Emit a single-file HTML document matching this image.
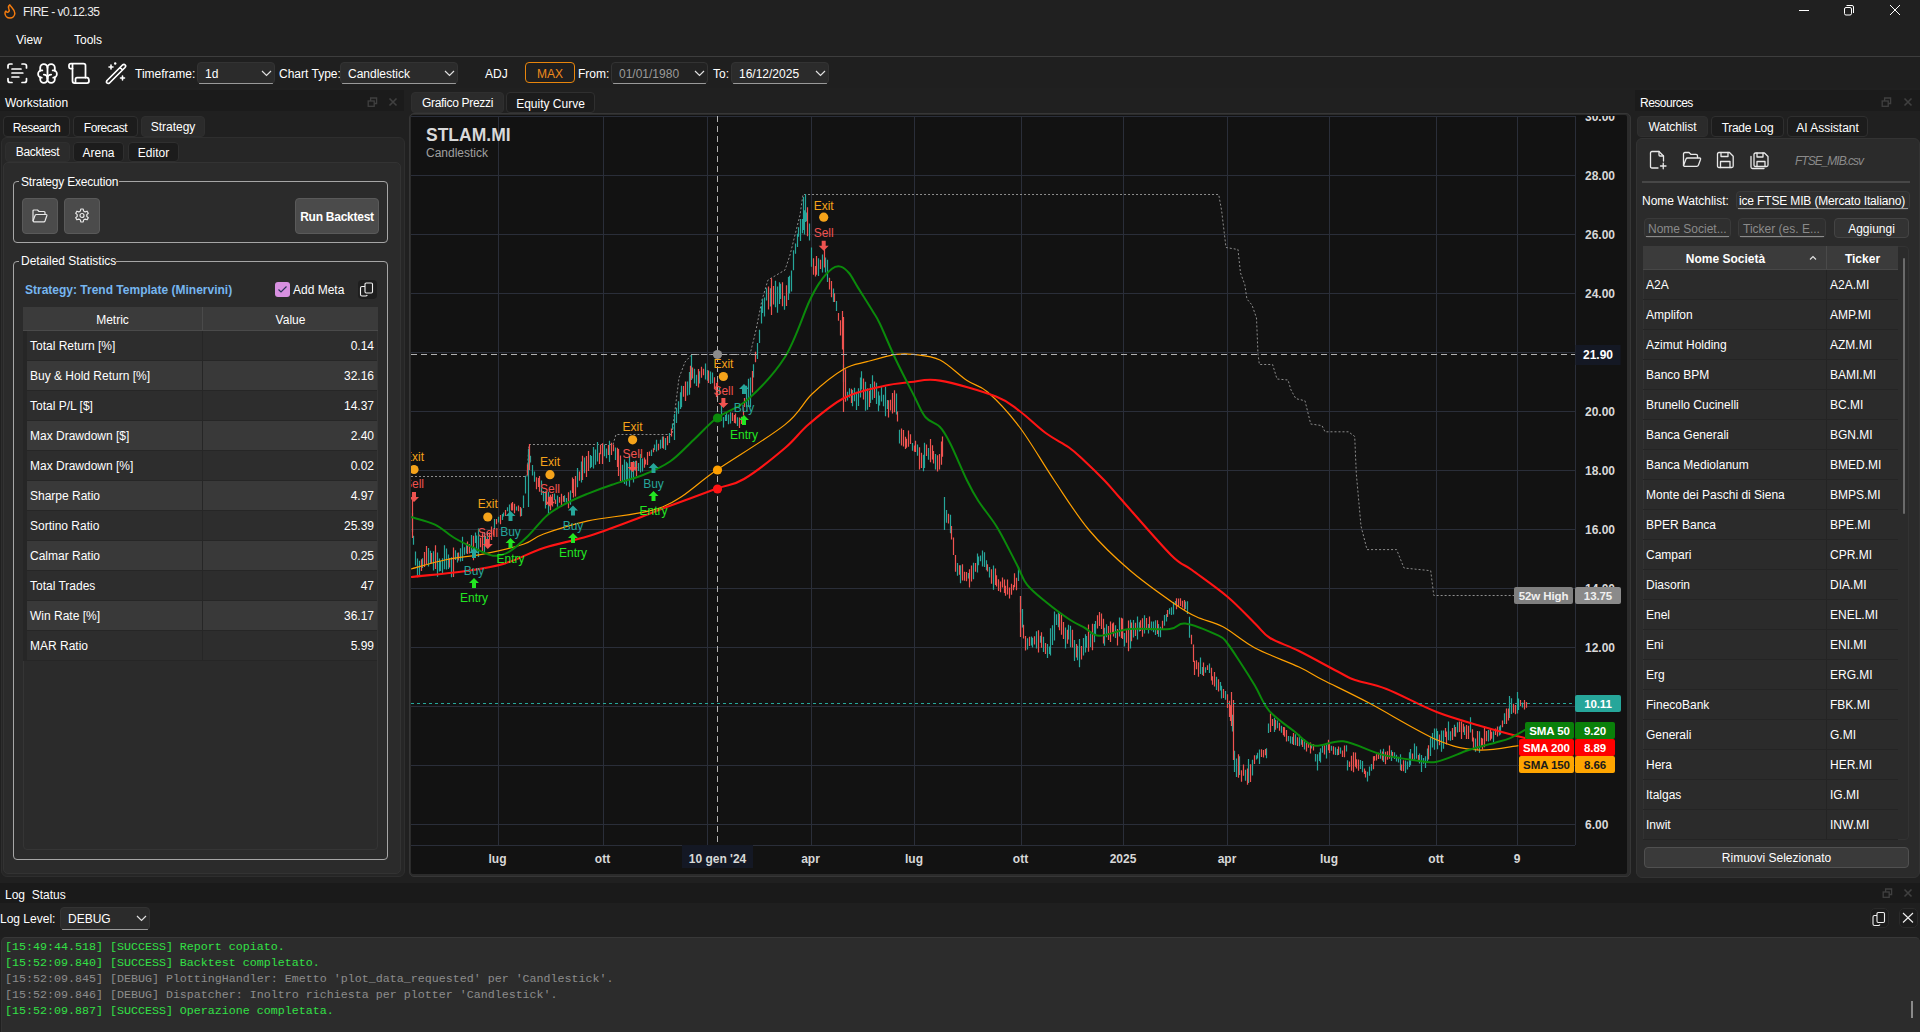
<!DOCTYPE html><html><head><meta charset="utf-8"><style>
*{margin:0;padding:0}
html,body{width:1920px;height:1032px;overflow:hidden;background:#202020;font-family:"Liberation Sans",sans-serif;font-size:12px;color:#ffffff}
.a{position:absolute}
.t{position:absolute;white-space:nowrap;line-height:16px;padding-top:1px}
svg text{font-family:"Liberation Sans",sans-serif}
</style></head><body>
<div class="a" style="left:0px;top:0px;width:1920px;height:56px;background:#202020"></div>
<svg class="a" style="left:0;top:0" width="24" height="24" viewBox="0 0 24 24"><path d="M9.8,4.9 C11.5,7.5 14.8,9.5 14.8,13.2 C14.8,16 12.6,18 9.9,18 C7.2,18 5,16 5,13.3 C5,12.3 5.3,11.5 5.9,11 C6.5,12.3 7.8,12.6 8.6,11.8 C9.5,10.9 9.3,9.5 8.7,8.2 C8.2,7 8.8,5.6 9.8,4.9 Z" fill="none" stroke="#f57c0f" stroke-width="1.5" stroke-linejoin="round"/></svg>
<div class="t" style="left:23px;top:3px;font-size:12px;color:#ececec;letter-spacing:-0.5px">FIRE - v0.12.35</div>
<div class="a" style="left:1799px;top:10px;width:10px;height:1px;background:#ffffff"></div>
<svg class="a" style="left:1843px;top:4px" width="12" height="12" viewBox="0 0 12 12"><rect x="1.5" y="3.5" width="7" height="7.5" rx="1.5" fill="none" stroke="#fff" stroke-width="1"/><path d="M3.5,1.5 H9 Q10.5,1.5 10.5,3 V9" fill="none" stroke="#fff" stroke-width="1"/></svg>
<svg class="a" style="left:1889px;top:4px" width="12" height="12" viewBox="0 0 12 12"><path d="M1,1 L11,11 M11,1 L1,11" stroke="#fff" stroke-width="1"/></svg>
<div class="t" style="left:16px;top:31px;font-size:12px">View</div>
<div class="t" style="left:74px;top:31px;font-size:12px">Tools</div>
<div class="a" style="left:0px;top:56px;width:1920px;height:1px;background:#3d3d3d"></div>
<div class="a" style="left:0px;top:57px;width:1920px;height:31px;background:#1f1f1f"></div>
<svg class="a" style="left:6px;top:62px" width="23" height="23" viewBox="0 0 23 23" fill="none" stroke="#fff" stroke-width="1.7" stroke-linecap="round">
<path d="M2,6 V4 Q2,2 4,2 H6 M16,2 H18 Q20.5,2 20.5,4 V6 M20.5,16.5 V18.5 Q20.5,20.5 18.5,20.5 H16 M6,20.5 H4 Q2,20.5 2,18.5 V16.5"/>
<path d="M6,7 H15 M6,11 H16.8 M6,15 H12.8"/></svg>
<svg class="a" style="left:35px;top:61px" width="25" height="25" viewBox="0 0 24 24" fill="none" stroke="#fff" stroke-width="1.75" stroke-linecap="round" stroke-linejoin="round">
<path d="M15.5 13a3.5 3.5 0 0 0 -3.5 3.5v1a3.5 3.5 0 0 0 7 0v-1.8"/><path d="M8.5 13a3.5 3.5 0 0 1 3.5 3.5v1a3.5 3.5 0 0 1 -7 0v-1.8"/><path d="M17.5 16a3.5 3.5 0 0 0 0 -7h-.5"/><path d="M19 9.3v-2.8a3.5 3.5 0 0 0 -7 0"/><path d="M6.5 16a3.5 3.5 0 0 1 0 -7h.5"/><path d="M5 9.3v-2.8a3.5 3.5 0 0 1 7 0v10"/></svg>
<svg class="a" style="left:67px;top:62px" width="24" height="23" viewBox="0 0 24 23" fill="none" stroke="#fff" stroke-width="1.75" stroke-linecap="round" stroke-linejoin="round">
<path d="M5.5,6.5 H3.5 Q2,6.5 2,5 V3.5 Q2,1.5 4,1.5 H16.5 Q18.5,1.5 18.5,3.5 V15.5"/><path d="M5.5,1.8 V19 Q5.5,21 7.5,21 H20 Q22,21 22,19 Q22,15.5 20,15.5 H10 Q8.5,15.5 8.5,17.5 V21"/></svg>
<svg class="a" style="left:104px;top:61px" width="24" height="24" viewBox="0 0 24 24" fill="none" stroke="#fff" stroke-width="1.7" stroke-linecap="round" stroke-linejoin="round">
<path d="M3,19.5 L18.5,4 Q20,2.8 21.2,4 Q22.2,5.2 21,6.5 L5.5,22 Q4,23 3,22 Q2,21 3,19.5 Z M16,6.5 L18.5,9"/>
<path d="M5,6 H9 M7,4 V8 M16.5,17 H20.5 M18.5,15 V19" stroke-width="1.6"/><circle cx="11.2" cy="2.5" r="1.2" fill="#fff" stroke="none"/></svg>
<div class="t" style="left:135px;top:65px;font-size:12px">Timeframe:</div>
<div class="a" style="left:197px;top:62px;width:78px;height:22px;background:#2b2b2b;border-radius:4px;border:1px solid #333;box-sizing:border-box;"></div><div class="a" style="left:199px;top:83px;width:74px;height:1px;background:#9a9a9a;border-radius:1px;"></div><div class="t" style="left:205px;top:62px;line-height:22px;color:#ffffff;">1d</div><div class="a" style="left:261px;top:70px;width:11px;height:7px;line-height:0"><svg width="11" height="7" viewBox="0 0 11 7"><path d="M1,1 L5.5,5.5 L10,1" stroke="#e0e0e0" stroke-width="1.2" fill="none"/></svg></div>
<div class="t" style="left:279px;top:65px;font-size:12px">Chart Type:</div>
<div class="a" style="left:340px;top:62px;width:118px;height:22px;background:#2b2b2b;border-radius:4px;border:1px solid #333;box-sizing:border-box;"></div><div class="a" style="left:342px;top:83px;width:114px;height:1px;background:#9a9a9a;border-radius:1px;"></div><div class="t" style="left:348px;top:62px;line-height:22px;color:#ffffff;">Candlestick</div><div class="a" style="left:444px;top:70px;width:11px;height:7px;line-height:0"><svg width="11" height="7" viewBox="0 0 11 7"><path d="M1,1 L5.5,5.5 L10,1" stroke="#e0e0e0" stroke-width="1.2" fill="none"/></svg></div>
<div class="t" style="left:485px;top:65px;font-size:12px">ADJ</div>
<div class="a" style="left:525px;top:62px;width:50px;height:21px;border:1px solid #e8850c;border-radius:4px;box-sizing:border-box;"></div>
<div class="t" style="left:537px;top:65px;font-size:12px;color:#f08a1c">MAX</div>
<div class="t" style="left:578px;top:65px;font-size:12px">From:</div>
<div class="a" style="left:611px;top:62px;width:97px;height:22px;background:#222222;border-radius:4px;border:1px solid #333;box-sizing:border-box;"></div><div class="a" style="left:613px;top:83px;width:93px;height:1px;background:#9a9a9a;border-radius:1px;"></div><div class="t" style="left:619px;top:62px;line-height:22px;color:#9a9a9a;">01/01/1980</div><div class="a" style="left:694px;top:70px;width:11px;height:7px;line-height:0"><svg width="11" height="7" viewBox="0 0 11 7"><path d="M1,1 L5.5,5.5 L10,1" stroke="#e0e0e0" stroke-width="1.2" fill="none"/></svg></div>
<div class="t" style="left:713px;top:65px;font-size:12px">To:</div>
<div class="a" style="left:731px;top:62px;width:98px;height:22px;background:#2b2b2b;border-radius:4px;border:1px solid #333;box-sizing:border-box;"></div><div class="a" style="left:733px;top:83px;width:94px;height:1px;background:#9a9a9a;border-radius:1px;"></div><div class="t" style="left:739px;top:62px;line-height:22px;color:#ffffff;">16/12/2025</div><div class="a" style="left:815px;top:70px;width:11px;height:7px;line-height:0"><svg width="11" height="7" viewBox="0 0 11 7"><path d="M1,1 L5.5,5.5 L10,1" stroke="#e0e0e0" stroke-width="1.2" fill="none"/></svg></div>
<div class="a" style="left:0px;top:90px;width:404px;height:21px;background:#1b1b1b"></div>
<div class="t" style="left:5px;top:94px;font-size:12px">Workstation</div>
<svg class="a" style="left:367px;top:97px" width="11" height="10" viewBox="0 0 11 10" fill="none" stroke="#404040" stroke-width="1.3"><rect x="1.2" y="4" width="6" height="5.3"/><path d="M3.6,4 V1 H9.6 V6.5 H7.2"/></svg>
<svg class="a" style="left:388px;top:97px" width="10" height="10" viewBox="0 0 10 10"><path d="M1.5,1.5 L8.5,8.5 M8.5,1.5 L1.5,8.5" stroke="#404040" stroke-width="1.6"/></svg>
<div class="a" style="left:3px;top:116px;width:67px;height:21px;background:#1c1c1c;border:1px solid #2f2f2f;border-radius:4px;box-sizing:border-box;"></div><div class="t" style="left:3px;top:117px;width:67px;text-align:center;line-height:21px;font-size:12px;letter-spacing:-0.5px">Research</div>
<div class="a" style="left:73px;top:116px;width:65px;height:21px;background:#1c1c1c;border:1px solid #2f2f2f;border-radius:4px;box-sizing:border-box;"></div><div class="t" style="left:73px;top:117px;width:65px;text-align:center;line-height:21px;font-size:12px;letter-spacing:-0.4px">Forecast</div>
<div class="a" style="left:141px;top:116px;width:64px;height:21px;background:#2b2b2b;border:1px solid #2f2f2f;border-radius:4px;box-sizing:border-box;"></div><div class="t" style="left:141px;top:116px;width:64px;text-align:center;line-height:21px;font-size:12px;letter-spacing:0px">Strategy</div>
<div class="a" style="left:1px;top:137px;width:404px;height:740px;background:#262626;border:1px solid #2e2e2e;border-radius:6px;box-sizing:border-box;"></div>
<div class="a" style="left:5px;top:142px;width:65px;height:20px;background:#2b2b2b;border:1px solid #2f2f2f;border-radius:4px;box-sizing:border-box;"></div><div class="t" style="left:5px;top:141px;width:65px;text-align:center;line-height:20px;font-size:12px;letter-spacing:-0.3px">Backtest</div>
<div class="a" style="left:73px;top:142px;width:51px;height:20px;background:#1c1c1c;border:1px solid #2f2f2f;border-radius:4px;box-sizing:border-box;"></div><div class="t" style="left:73px;top:142px;width:51px;text-align:center;line-height:20px;font-size:12px;letter-spacing:0px">Arena</div>
<div class="a" style="left:128px;top:142px;width:51px;height:20px;background:#1c1c1c;border:1px solid #2f2f2f;border-radius:4px;box-sizing:border-box;"></div><div class="t" style="left:128px;top:142px;width:51px;text-align:center;line-height:20px;font-size:12px;letter-spacing:0px">Editor</div>
<div class="a" style="left:3px;top:162px;width:398px;height:712px;background:#2b2b2b;border:1px solid #333;border-radius:5px;box-sizing:border-box;"></div>
<div class="a" style="left:13px;top:181px;width:375px;height:62px;border:1px solid #a6a6a6;border-radius:4px;box-sizing:border-box;"></div>
<div class="a" style="left:19px;top:175px;width:100px;height:14px;background:#2b2b2b"></div>
<div class="t" style="left:21px;top:173px;font-size:12px;letter-spacing:-0.2px">Strategy Execution</div>
<div class="a" style="left:22px;top:198px;width:36px;height:36px;background:#4b4b4b;border:1px solid #5a5a5a;box-sizing:border-box;border-radius:4px"></div>
<svg class="a" style="left:32px;top:209px" width="16" height="14" viewBox="0 0 16 14" fill="none" stroke="#e8e8e8" stroke-width="1.2" stroke-linejoin="round"><path d="M1,12 V2 Q1,1 2,1 H5.5 L7,2.5 H12 Q13,2.5 13,3.5 V5.5"/><path d="M1,12 L3,6.5 Q3.3,5.5 4.5,5.5 H14 Q15.2,5.5 14.8,6.8 L13,12 Q12.7,12.8 11.8,12.8 H1.8 Z"/></svg>
<div class="a" style="left:64px;top:198px;width:36px;height:36px;background:#4b4b4b;border:1px solid #5a5a5a;box-sizing:border-box;border-radius:4px"></div>
<svg class="a" style="left:74px;top:208px" width="16" height="16" viewBox="0 0 16 16" fill="none" stroke="#e8e8e8" stroke-width="1.2"><path d="M6.8,1 H9.2 L9.6,3 L11.2,3.9 L13.1,3.2 L14.3,5.3 L12.8,6.6 V8.4 L14.3,9.7 L13.1,11.8 L11.2,11.1 L9.6,12 L9.2,14 H6.8 L6.4,12 L4.8,11.1 L2.9,11.8 L1.7,9.7 L3.2,8.4 V6.6 L1.7,5.3 L2.9,3.2 L4.8,3.9 L6.4,3 Z" stroke-linejoin="round"/><circle cx="8" cy="7.5" r="2"/></svg>
<div class="a" style="left:295px;top:198px;width:84px;height:36px;background:#4b4b4b;border:1px solid #5a5a5a;box-sizing:border-box;border-radius:4px"></div>
<div class="t" style="left:295px;top:208px;width:84px;text-align:center;font-weight:bold;font-size:12px;letter-spacing:-0.25px">Run Backtest</div>
<div class="a" style="left:13px;top:261px;width:375px;height:599px;border:1px solid #a6a6a6;border-radius:4px;box-sizing:border-box;"></div>
<div class="a" style="left:19px;top:254px;width:97px;height:14px;background:#2b2b2b"></div>
<div class="t" style="left:21px;top:252px;font-size:12px">Detailed Statistics</div>
<div class="t" style="left:25px;top:281px;font-weight:bold;color:#76b6f0;font-size:12px">Strategy: Trend Template (Minervini)</div>
<div class="a" style="left:275px;top:282px;width:15px;height:15px;background:#d890e0;border-radius:3px"></div>
<svg class="a" style="left:277px;top:285px" width="11" height="9" viewBox="0 0 11 9"><path d="M1.5,4.5 L4,7 L9.5,1.5" stroke="#2a3458" stroke-width="1.2" fill="none"/></svg>
<div class="t" style="left:293px;top:281px;font-size:12px">Add Meta</div>
<div class="a" style="left:358px;top:280px;width:19px;height:19px;background:#1e1e1e;border-radius:4px"></div>
<svg class="a" style="left:359px;top:282px" width="16" height="16" viewBox="0 0 16 16" fill="none" stroke="#f0f0f0" stroke-width="1.1"><rect x="6" y="1" width="7.5" height="10" rx="1.2"/><path d="M6,4.5 H3 Q1.5,4.5 1.5,6 V12.5 Q1.5,14 3,14 H6.5 Q7.8,14 8.3,13"/></svg>
<div class="a" style="left:23px;top:307px;width:355px;height:543px;background:#2b2b2b;border:1px solid #353535;border-radius:0 0 4px 4px;box-sizing:border-box;"></div>
<div class="a" style="left:23px;top:307px;width:355px;height:24px;background:#3b3b3b;border-bottom:1px solid #4a4a4a;box-sizing:border-box"></div>
<div class="a" style="left:202px;top:307px;width:1px;height:23px;background:#4a4a4a"></div>
<div class="t" style="left:23px;top:311px;width:179px;text-align:center;font-size:12px">Metric</div>
<div class="t" style="left:203px;top:311px;width:175px;text-align:center;font-size:12px">Value</div>
<div class="a" style="left:23px;top:331px;width:4px;height:330px;background:#262626"></div>
<div class="a" style="left:27px;top:331px;width:350px;height:30px;background:#2d2d2d"></div>
<div class="a" style="left:27px;top:360px;width:350px;height:1px;background:#262626"></div>
<div class="a" style="left:202px;top:331px;width:1px;height:30px;background:#262626"></div>
<div class="t" style="left:30px;top:337px;font-size:12px">Total Return [%]</div>
<div class="t" style="left:203px;top:337px;width:171px;text-align:right;font-size:12px">0.14</div>
<div class="a" style="left:27px;top:361px;width:350px;height:30px;background:#393939"></div>
<div class="a" style="left:27px;top:390px;width:350px;height:1px;background:#262626"></div>
<div class="a" style="left:202px;top:361px;width:1px;height:30px;background:#262626"></div>
<div class="t" style="left:30px;top:367px;font-size:12px">Buy &amp; Hold Return [%]</div>
<div class="t" style="left:203px;top:367px;width:171px;text-align:right;font-size:12px">32.16</div>
<div class="a" style="left:27px;top:391px;width:350px;height:30px;background:#2d2d2d"></div>
<div class="a" style="left:27px;top:420px;width:350px;height:1px;background:#262626"></div>
<div class="a" style="left:202px;top:391px;width:1px;height:30px;background:#262626"></div>
<div class="t" style="left:30px;top:397px;font-size:12px">Total P/L [$]</div>
<div class="t" style="left:203px;top:397px;width:171px;text-align:right;font-size:12px">14.37</div>
<div class="a" style="left:27px;top:421px;width:350px;height:30px;background:#393939"></div>
<div class="a" style="left:27px;top:450px;width:350px;height:1px;background:#262626"></div>
<div class="a" style="left:202px;top:421px;width:1px;height:30px;background:#262626"></div>
<div class="t" style="left:30px;top:427px;font-size:12px">Max Drawdown [$]</div>
<div class="t" style="left:203px;top:427px;width:171px;text-align:right;font-size:12px">2.40</div>
<div class="a" style="left:27px;top:451px;width:350px;height:30px;background:#2d2d2d"></div>
<div class="a" style="left:27px;top:480px;width:350px;height:1px;background:#262626"></div>
<div class="a" style="left:202px;top:451px;width:1px;height:30px;background:#262626"></div>
<div class="t" style="left:30px;top:457px;font-size:12px">Max Drawdown [%]</div>
<div class="t" style="left:203px;top:457px;width:171px;text-align:right;font-size:12px">0.02</div>
<div class="a" style="left:27px;top:481px;width:350px;height:30px;background:#393939"></div>
<div class="a" style="left:27px;top:510px;width:350px;height:1px;background:#262626"></div>
<div class="a" style="left:202px;top:481px;width:1px;height:30px;background:#262626"></div>
<div class="t" style="left:30px;top:487px;font-size:12px">Sharpe Ratio</div>
<div class="t" style="left:203px;top:487px;width:171px;text-align:right;font-size:12px">4.97</div>
<div class="a" style="left:27px;top:511px;width:350px;height:30px;background:#2d2d2d"></div>
<div class="a" style="left:27px;top:540px;width:350px;height:1px;background:#262626"></div>
<div class="a" style="left:202px;top:511px;width:1px;height:30px;background:#262626"></div>
<div class="t" style="left:30px;top:517px;font-size:12px">Sortino Ratio</div>
<div class="t" style="left:203px;top:517px;width:171px;text-align:right;font-size:12px">25.39</div>
<div class="a" style="left:27px;top:541px;width:350px;height:30px;background:#393939"></div>
<div class="a" style="left:27px;top:570px;width:350px;height:1px;background:#262626"></div>
<div class="a" style="left:202px;top:541px;width:1px;height:30px;background:#262626"></div>
<div class="t" style="left:30px;top:547px;font-size:12px">Calmar Ratio</div>
<div class="t" style="left:203px;top:547px;width:171px;text-align:right;font-size:12px">0.25</div>
<div class="a" style="left:27px;top:571px;width:350px;height:30px;background:#2d2d2d"></div>
<div class="a" style="left:27px;top:600px;width:350px;height:1px;background:#262626"></div>
<div class="a" style="left:202px;top:571px;width:1px;height:30px;background:#262626"></div>
<div class="t" style="left:30px;top:577px;font-size:12px">Total Trades</div>
<div class="t" style="left:203px;top:577px;width:171px;text-align:right;font-size:12px">47</div>
<div class="a" style="left:27px;top:601px;width:350px;height:30px;background:#393939"></div>
<div class="a" style="left:27px;top:630px;width:350px;height:1px;background:#262626"></div>
<div class="a" style="left:202px;top:601px;width:1px;height:30px;background:#262626"></div>
<div class="t" style="left:30px;top:607px;font-size:12px">Win Rate [%]</div>
<div class="t" style="left:203px;top:607px;width:171px;text-align:right;font-size:12px">36.17</div>
<div class="a" style="left:27px;top:631px;width:350px;height:30px;background:#2d2d2d"></div>
<div class="a" style="left:27px;top:660px;width:350px;height:1px;background:#262626"></div>
<div class="a" style="left:202px;top:631px;width:1px;height:30px;background:#262626"></div>
<div class="t" style="left:30px;top:637px;font-size:12px">MAR Ratio</div>
<div class="t" style="left:203px;top:637px;width:171px;text-align:right;font-size:12px">5.99</div>
<div class="a" style="left:411px;top:92px;width:93px;height:21px;background:#2b2b2b;border:1px solid #2f2f2f;border-radius:4px;box-sizing:border-box;"></div><div class="t" style="left:411px;top:92px;width:93px;text-align:center;line-height:21px;font-size:12px;letter-spacing:-0.3px">Grafico Prezzi</div>
<div class="a" style="left:506px;top:92px;width:89px;height:21px;background:#1c1c1c;border:1px solid #2f2f2f;border-radius:4px;box-sizing:border-box;"></div><div class="t" style="left:506px;top:93px;width:89px;text-align:center;line-height:21px;font-size:12px;letter-spacing:0px">Equity Curve</div>
<div class="a" style="left:409px;top:113px;width:1222px;height:764px;background:#2b2b2b;border:1px solid #363636;border-radius:5px;box-sizing:border-box;"></div>
<div class="a" style="left:411px;top:115px;width:1216px;height:759px;background:#121212;border-radius:2px;"></div>
<svg class="a" style="left:0;top:0" width="1920" height="1032" viewBox="0 0 1920 1032">
<defs><clipPath id="plot"><rect x="411" y="116" width="1164" height="729"/></clipPath><clipPath id="ax"><rect x="411" y="116" width="1216" height="757"/></clipPath></defs>
<g clip-path="url(#plot)">
<path d="M411,116.5H1575M411,175.5H1575M411,234.5H1575M411,293.5H1575M411,352.5H1575M411,411.5H1575M411,470.5H1575M411,529.5H1575M411,588.5H1575M411,647.5H1575M411,706.5H1575M411,765.5H1575M411,824.5H1575M498.5,116V845M603.5,116V845M707.5,116V845M811.5,116V845M914.5,116V845M1021.5,116V845M1123.5,116V845M1227.5,116V845M1329.5,116V845M1436.5,116V845M1517.5,116V845" stroke="#2a2e39" stroke-width="1" fill="none"/>
<polyline points="411.0,476.5 527.0,476.5 529.0,444.5 613.0,444.5 616.0,434.5 672.0,434.5 679.0,378.0 685.0,362.0 692.0,354.5 750.0,354.5 756.0,330.0 762.0,300.0 768.0,280.0 785.0,270.0 790.0,255.0 800.0,215.0 803.0,194.5 1218.7,194.5 1221.6,210.5 1226.0,247.5 1238.0,249.5 1240.5,273.0 1244.8,284.6 1246.9,299.0 1252.0,305.0 1256.5,318.0 1258.0,354.4 1259.4,364.5 1272.6,364.5 1277.0,379.0 1288.0,380.0 1291.0,390.0 1295.8,398.6 1305.0,400.8 1310.7,424.0 1322.0,425.6 1325.0,431.8 1348.5,431.8 1354.7,436.4 1356.3,473.6 1361.0,526.0 1367.0,549.6 1396.6,549.6 1404.0,568.0 1430.7,570.7 1433.8,595.5 1514.4,595.5" stroke="#8c8c8c" stroke-width="1" stroke-dasharray="2,2" fill="none"/>
<path d="M412.5,512.8V532.3M413.5,535.8V544.7M415.5,551.5V565.5M417.5,558.5V577.3M419.5,560.7V575.1M422.5,558.2V567.9M428.5,547.9V566.5M430.5,550.7V563.8M433.5,551.3V570.5M437.5,552.5V576.7M439.5,558.5V571.6M440.5,561.0V570.9M442.5,558.3V573.6M444.5,545.2V569.2M446.5,548.4V569.6M448.5,554.5V568.9M451.5,557.2V577.2M455.5,550.3V559.9M457.5,552.7V562.6M460.5,548.3V561.6M462.5,536.7V561.0M464.5,547.2V554.7M466.5,543.4V553.6M471.5,534.9V550.9M475.5,532.4V543.0M476.5,535.4V550.1M478.5,528.6V556.9M484.5,532.2V552.9M487.5,532.3V545.0M494.5,518.9V528.9M498.5,516.7V522.5M502.5,514.0V519.9M503.5,512.4V516.4M507.5,507.3V511.3M509.5,504.6V513.1M516.5,506.4V510.5M521.5,508.3V515.9M523.5,495.5V508.1M525.5,475.7V493.5M530.5,455.8V462.5M532.5,465.0V475.4M534.5,471.4V481.8M541.5,480.4V494.9M543.5,491.0V501.2M545.5,491.2V508.6M548.5,491.7V514.1M554.5,493.6V500.2M557.5,495.6V506.8M564.5,495.3V502.3M566.5,497.9V503.3M570.5,490.4V504.7M577.5,468.0V487.3M581.5,461.4V482.4M584.5,457.5V473.3M590.5,455.1V468.3M591.5,456.0V467.0M593.5,447.1V468.4M595.5,449.6V464.8M597.5,442.1V461.5M604.5,444.4V456.3M606.5,448.5V458.3M609.5,440.8V461.9M615.5,447.5V460.1M622.5,464.8V482.0M624.5,459.4V484.0M626.5,461.8V485.4M627.5,463.2V480.8M629.5,456.2V486.8M631.5,467.8V478.9M633.5,461.1V482.6M635.5,460.8V470.7M638.5,462.9V470.9M640.5,454.0V472.5M642.5,458.6V471.4M651.5,449.7V456.0M654.5,444.5V449.9M656.5,439.8V451.6M660.5,439.8V448.8M662.5,436.6V448.1M665.5,438.0V450.1M669.5,433.1V442.9M672.5,423.6V430.0M674.5,414.1V439.9M676.5,407.7V422.9M678.5,401.2V413.7M680.5,392.2V408.9M681.5,385.8V407.2M687.5,381.5V395.4M689.5,371.9V394.7M694.5,368.8V383.5M696.5,374.7V386.0M699.5,371.2V383.4M705.5,363.4V379.6M707.5,370.0V380.7M710.5,371.4V384.1M712.5,372.4V383.2M719.5,387.4V394.7M721.5,402.5V420.7M723.5,416.9V427.4M725.5,414.9V421.1M726.5,412.2V421.1M728.5,414.6V424.2M730.5,412.3V423.4M737.5,417.2V426.0M746.5,385.8V407.3M748.5,378.7V407.1M750.5,377.4V407.2M753.5,364.2V377.5M757.5,343.1V359.1M759.5,329.8V343.1M761.5,306.2V323.6M762.5,299.3V313.1M764.5,297.6V316.4M766.5,288.3V300.4M770.5,288.3V306.5M775.5,280.8V307.3M777.5,286.6V312.8M779.5,282.3V304.0M780.5,283.8V299.1M784.5,295.7V309.7M788.5,277.0V300.0M789.5,275.8V293.5M791.5,270.6V291.5M793.5,250.3V270.2M795.5,243.4V253.8M797.5,233.7V246.9M798.5,227.3V236.8M800.5,218.9V241.0M802.5,219.1V233.2M804.5,210.3V234.5M806.5,212.5V221.3M809.5,223.5V240.6M811.5,247.5V266.8M818.5,258.3V275.9M822.5,254.5V272.4M825.5,257.5V272.5M827.5,259.7V282.1M833.5,288.6V301.9M836.5,301.1V311.0M843.5,364.2V382.2M847.5,391.8V400.5M849.5,388.3V397.7M852.5,390.1V406.3M854.5,387.7V401.3M856.5,391.7V410.1M858.5,388.2V405.9M860.5,377.6V397.5M861.5,371.3V389.5M865.5,381.8V410.8M867.5,388.2V409.7M870.5,384.0V403.1M872.5,375.3V399.8M876.5,382.8V403.9M878.5,391.6V411.2M879.5,395.6V405.4M881.5,386.9V401.6M883.5,394.7V406.3M885.5,386.7V416.3M887.5,400.1V409.1M896.5,393.6V414.4M899.5,429.7V443.6M912.5,442.9V450.8M917.5,444.6V455.7M923.5,454.8V471.2M924.5,442.7V468.1M928.5,447.9V459.8M935.5,454.1V469.5M944.5,504.6V514.3M946.5,510.0V522.7M950.5,514.8V533.3M957.5,562.9V575.8M960.5,565.3V583.2M968.5,573.1V578.4M973.5,562.8V579.3M977.5,553.6V572.4M978.5,556.4V565.3M980.5,555.4V561.2M982.5,550.4V566.6M984.5,552.3V567.0M986.5,560.2V570.2M989.5,566.9V577.5M993.5,565.5V589.8M1018.5,566.7V581.1M1020.5,595.9V612.5M1022.5,608.9V627.4M1027.5,638.2V649.5M1031.5,636.6V645.5M1032.5,637.7V647.4M1036.5,631.2V648.6M1040.5,635.8V642.8M1043.5,636.7V652.0M1047.5,644.0V658.0M1049.5,646.5V653.9M1050.5,628.2V655.4M1052.5,625.2V644.9M1054.5,611.5V640.4M1056.5,614.3V625.0M1058.5,612.3V627.3M1065.5,627.6V648.4M1068.5,624.7V639.6M1070.5,625.7V647.3M1074.5,639.9V661.0M1077.5,645.7V660.3M1079.5,639.0V667.3M1083.5,638.0V655.6M1085.5,634.2V652.6M1086.5,636.0V647.7M1090.5,633.4V646.9M1094.5,624.1V642.3M1095.5,621.0V635.2M1104.5,627.7V645.7M1106.5,624.3V637.2M1115.5,625.2V638.1M1119.5,617.5V636.5M1124.5,633.1V646.5M1130.5,619.7V648.4M1133.5,620.0V637.6M1137.5,616.4V639.4M1139.5,622.2V631.4M1144.5,615.2V633.5M1148.5,624.0V633.5M1151.5,621.5V630.5M1153.5,621.5V632.3M1155.5,620.2V635.0M1158.5,623.9V636.7M1160.5,626.8V637.3M1164.5,615.0V625.8M1166.5,614.0V621.4M1169.5,608.2V614.3M1171.5,607.3V615.0M1173.5,602.0V614.4M1175.5,600.9V604.9M1185.5,601.6V609.0M1187.5,601.3V614.1M1189.5,616.7V637.8M1200.5,657.4V674.0M1202.5,667.1V674.9M1205.5,667.3V672.8M1209.5,663.5V673.0M1216.5,676.8V689.9M1220.5,682.0V690.5M1221.5,685.7V698.6M1225.5,691.1V699.8M1232.5,714.8V731.4M1234.5,750.8V772.1M1236.5,758.6V777.1M1239.5,756.2V775.0M1245.5,769.7V780.8M1248.5,759.0V783.0M1252.5,759.7V775.5M1256.5,755.2V759.4M1257.5,752.7V758.6M1259.5,749.5V764.0M1266.5,748.2V758.3M1268.5,723.5V733.0M1274.5,717.8V732.0M1277.5,720.5V728.3M1281.5,725.7V732.7M1288.5,736.0V741.3M1290.5,736.2V743.4M1292.5,736.7V744.0M1295.5,734.3V745.2M1299.5,734.8V746.3M1301.5,738.8V744.7M1304.5,739.3V749.4M1311.5,744.0V748.4M1315.5,754.0V761.6M1317.5,754.2V770.4M1319.5,752.2V761.1M1320.5,748.2V762.5M1322.5,744.6V752.8M1326.5,743.5V758.5M1331.5,745.7V750.8M1335.5,747.2V755.1M1337.5,748.9V755.2M1340.5,747.6V753.8M1346.5,745.2V751.5M1347.5,760.2V770.6M1360.5,759.9V768.9M1362.5,761.1V772.2M1367.5,771.8V781.6M1369.5,766.5V775.7M1371.5,763.9V770.8M1380.5,749.6V758.8M1383.5,748.7V762.1M1391.5,750.3V760.9M1394.5,752.2V758.9M1396.5,754.7V761.5M1398.5,756.8V762.5M1400.5,754.2V770.3M1405.5,760.5V773.1M1407.5,761.6V769.5M1409.5,752.2V766.9M1410.5,749.0V765.3M1414.5,743.4V761.0M1416.5,746.3V758.7M1419.5,753.6V763.5M1421.5,754.9V772.0M1423.5,757.9V763.8M1425.5,756.3V768.1M1427.5,748.4V761.0M1430.5,737.3V756.1M1432.5,732.9V747.5M1434.5,728.6V749.8M1436.5,728.6V741.3M1437.5,731.0V749.2M1441.5,730.4V751.8M1443.5,730.5V748.7M1448.5,721.5V740.2M1450.5,731.2V740.7M1454.5,724.7V736.5M1457.5,722.2V732.4M1464.5,726.5V734.9M1470.5,717.3V732.4M1475.5,738.5V751.8M1479.5,731.3V752.8M1488.5,730.1V741.4M1493.5,731.2V742.3M1499.5,726.5V735.5M1500.5,725.2V734.5M1504.5,713.2V724.0M1509.5,696.0V718.1M1511.5,698.3V713.9M1517.5,700.0V713.6M1518.5,698.4V710.1M1522.5,702.4V707.6M528.5,449.0V507.0M944.5,497.0V530.0M805.5,194.0V222.0M803.5,197.0V230.0M691.5,355.0V380.0M1517.5,692.0V712.0" stroke="#26a69a" stroke-width="1.2" fill="none"/>
<path d="M421.5,559.2V571.0M424.5,551.9V566.9M426.5,546.1V564.0M431.5,553.0V563.4M435.5,545.2V569.1M449.5,558.3V567.5M453.5,547.5V577.1M458.5,552.5V560.4M467.5,541.4V554.1M469.5,544.1V553.6M473.5,535.8V560.2M480.5,537.7V547.2M482.5,533.2V551.4M485.5,535.9V544.7M489.5,532.4V539.4M491.5,526.4V540.0M493.5,529.7V535.5M496.5,519.1V524.2M500.5,515.1V524.3M505.5,510.0V516.0M511.5,503.3V510.6M512.5,501.9V510.5M514.5,503.7V513.2M518.5,505.4V511.3M520.5,506.9V516.6M527.5,464.3V475.3M529.5,454.9V467.2M536.5,477.3V489.3M538.5,478.0V487.1M539.5,476.1V491.8M546.5,491.7V505.0M550.5,494.8V510.3M552.5,494.0V506.4M555.5,499.6V503.9M559.5,497.0V502.8M561.5,493.8V507.1M563.5,496.0V501.8M568.5,492.3V508.2M572.5,477.5V493.0M573.5,479.1V497.6M575.5,476.0V496.6M579.5,471.4V480.8M582.5,455.7V480.1M586.5,456.1V477.0M588.5,450.9V471.0M599.5,452.8V464.0M600.5,444.8V454.3M602.5,443.3V464.1M608.5,445.1V455.1M611.5,442.7V454.9M613.5,444.5V451.3M617.5,447.7V467.0M618.5,448.9V475.9M620.5,455.5V481.3M636.5,460.7V476.6M644.5,457.4V467.8M645.5,459.6V464.4M647.5,452.1V464.9M649.5,451.4V456.0M653.5,448.3V452.3M658.5,443.8V450.2M663.5,436.6V448.7M667.5,436.1V445.3M671.5,428.5V436.4M683.5,385.9V396.7M685.5,381.4V400.9M690.5,365.8V387.7M692.5,367.6V378.6M698.5,368.9V387.6M701.5,366.8V377.7M703.5,368.8V375.3M708.5,370.6V383.1M714.5,377.3V389.3M716.5,382.9V397.0M717.5,381.5V400.1M732.5,412.7V420.9M734.5,415.0V422.9M735.5,413.4V423.5M739.5,417.6V428.1M741.5,416.8V424.0M743.5,407.3V415.4M744.5,397.9V407.0M752.5,371.0V392.4M755.5,351.8V362.3M768.5,286.5V309.5M771.5,278.3V315.1M773.5,285.9V304.4M782.5,282.3V306.3M786.5,285.3V306.1M807.5,207.2V236.2M813.5,258.3V274.8M815.5,265.9V276.4M816.5,256.1V274.8M820.5,259.8V269.1M824.5,249.0V267.4M829.5,277.7V289.5M831.5,281.1V297.3M834.5,293.3V302.0M838.5,312.9V320.7M840.5,320.3V335.5M842.5,311.1V349.5M845.5,369.3V401.8M851.5,388.7V402.9M863.5,378.5V399.5M869.5,390.7V407.1M874.5,381.6V398.0M888.5,400.2V417.6M890.5,399.7V410.4M892.5,393.1V413.6M894.5,390.3V412.3M897.5,411.5V421.4M901.5,428.4V445.6M903.5,429.9V446.4M905.5,436.7V449.0M906.5,438.8V447.8M908.5,430.4V446.7M910.5,434.3V444.0M914.5,445.4V451.8M915.5,440.8V452.1M919.5,447.3V469.4M921.5,452.7V468.0M926.5,444.6V456.0M930.5,439.1V462.3M932.5,445.2V459.5M933.5,451.1V463.6M937.5,455.2V471.4M939.5,454.1V469.6M941.5,441.4V464.8M942.5,436.5V456.8M948.5,513.7V523.6M951.5,526.0V539.4M953.5,537.4V554.9M955.5,554.9V571.8M959.5,565.2V574.7M962.5,564.2V580.5M964.5,571.8V580.8M966.5,572.1V581.2M969.5,569.2V587.5M971.5,565.5V581.6M975.5,562.9V571.8M987.5,564.2V571.6M991.5,569.3V583.7M995.5,568.4V584.9M996.5,575.2V586.4M998.5,579.2V590.9M1000.5,581.5V592.3M1002.5,577.6V587.5M1004.5,579.5V593.0M1005.5,585.8V595.7M1007.5,579.5V594.6M1009.5,587.4V598.6M1011.5,583.7V594.8M1013.5,584.9V590.3M1014.5,573.3V587.3M1016.5,577.7V590.3M1023.5,624.7V638.4M1025.5,636.1V650.6M1029.5,636.7V646.0M1034.5,636.3V644.4M1038.5,630.3V652.5M1041.5,632.3V647.7M1045.5,643.1V654.1M1059.5,613.7V630.2M1061.5,614.8V634.8M1063.5,622.1V639.1M1067.5,629.8V643.8M1072.5,629.8V647.4M1076.5,644.0V657.6M1081.5,645.9V659.4M1088.5,624.4V651.7M1092.5,623.7V650.3M1097.5,615.2V628.4M1099.5,611.9V626.0M1101.5,613.6V628.9M1103.5,618.7V643.4M1108.5,625.9V640.1M1110.5,621.5V642.0M1112.5,623.4V632.2M1113.5,622.5V636.4M1117.5,629.1V645.4M1121.5,617.7V638.1M1122.5,618.6V639.1M1126.5,628.9V642.8M1128.5,620.6V651.2M1131.5,622.5V641.2M1135.5,622.7V636.0M1140.5,620.2V631.0M1142.5,618.3V636.7M1146.5,617.9V629.9M1149.5,616.4V629.4M1157.5,620.3V634.1M1162.5,620.7V629.9M1167.5,610.1V616.9M1176.5,598.2V609.3M1178.5,598.4V606.0M1180.5,598.2V606.0M1182.5,600.7V607.6M1184.5,600.0V609.9M1191.5,634.8V644.3M1193.5,644.6V662.1M1194.5,660.7V675.0M1196.5,660.3V669.3M1198.5,662.3V676.7M1203.5,662.6V675.9M1207.5,665.2V669.9M1211.5,667.8V680.6M1212.5,676.2V684.7M1214.5,672.1V686.4M1218.5,679.2V691.5M1223.5,689.1V698.0M1227.5,694.2V707.9M1229.5,700.7V716.9M1230.5,705.3V720.9M1238.5,754.2V777.8M1241.5,770.2V781.7M1243.5,764.4V775.8M1247.5,768.4V784.7M1250.5,764.2V782.1M1254.5,755.3V764.1M1261.5,749.2V757.1M1263.5,750.0V757.4M1265.5,749.1V755.2M1270.5,713.5V731.9M1272.5,718.9V725.9M1275.5,719.7V729.8M1279.5,722.7V730.7M1283.5,727.0V735.3M1284.5,727.2V736.8M1286.5,730.1V741.5M1293.5,732.9V745.0M1297.5,737.2V745.9M1302.5,740.1V746.9M1306.5,743.1V751.4M1308.5,743.1V747.7M1310.5,742.5V753.5M1313.5,744.1V750.4M1324.5,745.3V754.6M1328.5,739.8V750.2M1329.5,744.1V753.1M1333.5,746.2V754.4M1338.5,746.5V755.0M1342.5,750.4V757.1M1344.5,745.6V757.2M1349.5,761.5V767.1M1351.5,755.8V770.7M1353.5,752.2V772.2M1355.5,752.5V766.8M1356.5,759.2V768.5M1358.5,759.4V770.8M1364.5,768.5V774.1M1365.5,770.8V777.4M1373.5,756.3V769.2M1374.5,755.9V760.7M1376.5,754.3V760.5M1378.5,752.7V759.0M1382.5,751.5V760.4M1385.5,751.7V764.2M1387.5,751.2V759.8M1389.5,745.5V758.7M1392.5,752.0V757.3M1401.5,764.4V770.9M1403.5,760.3V771.3M1412.5,753.5V760.3M1418.5,755.0V760.0M1428.5,745.2V759.4M1439.5,734.5V745.2M1445.5,728.0V737.0M1446.5,731.6V744.6M1452.5,728.0V740.0M1455.5,727.0V736.7M1459.5,721.4V732.0M1461.5,721.5V739.1M1463.5,723.8V732.3M1466.5,724.9V738.9M1468.5,725.8V739.1M1472.5,729.3V741.6M1473.5,737.4V748.1M1477.5,731.1V750.3M1481.5,737.8V746.5M1482.5,738.4V749.4M1484.5,726.2V747.2M1486.5,731.0V741.2M1490.5,727.9V740.6M1491.5,731.7V738.8M1495.5,728.4V735.1M1497.5,726.4V736.4M1502.5,720.6V727.2M1506.5,708.4V724.1M1508.5,708.5V720.4M1513.5,703.8V712.8M1515.5,704.9V714.2M1520.5,700.0V706.0M1524.5,700.0V709.4M1526.5,701.9V707.8M412.5,494.0V538.0M843.5,317.0V412.0M1020.5,596.0V637.0M1231.5,692.0V726.0M1233.5,700.0V760.0M529.5,444.0V470.0" stroke="#ef5350" stroke-width="1.2" fill="none"/>
<path d="M411.0,569.0 C417.0,567.4 434.6,562.0 447.0,559.5 C459.4,557.0 472.7,556.3 485.5,553.7 C498.3,551.1 514.3,547.3 524.0,544.0 C533.7,540.7 532.9,537.9 543.6,534.0 C554.3,530.1 568.2,525.3 588.0,520.8 C607.8,516.3 641.0,515.5 662.5,507.0 C684.0,498.5 696.4,483.7 716.8,470.0 C737.2,456.3 769.1,437.3 785.0,424.6 C800.9,411.9 802.2,403.3 812.0,394.0 C821.8,384.7 834.8,374.4 844.0,369.0 C853.2,363.6 858.3,364.1 867.0,361.7 C875.7,359.3 888.5,355.6 896.3,354.4 C904.1,353.2 906.4,353.5 913.7,354.4 C921.0,355.3 931.1,355.6 940.0,360.0 C948.9,364.4 959.1,375.3 967.0,380.6 C974.9,385.9 978.9,384.3 987.6,392.0 C996.4,399.7 1008.4,412.3 1019.5,427.0 C1030.6,441.7 1042.4,462.8 1054.0,480.0 C1065.6,497.2 1076.4,515.0 1089.0,530.0 C1101.6,545.0 1115.3,557.8 1129.5,570.0 C1143.7,582.2 1162.8,595.6 1174.0,603.4 C1185.2,611.2 1188.2,612.9 1196.4,616.8 C1204.6,620.7 1213.2,621.6 1223.0,626.8 C1232.8,632.0 1242.3,641.3 1255.0,648.0 C1267.7,654.7 1287.7,661.7 1299.0,667.0 C1310.3,672.3 1311.2,674.0 1323.0,680.0 C1334.8,686.0 1350.6,693.3 1369.6,703.3 C1388.5,713.3 1418.7,732.0 1436.7,739.8 C1454.7,747.6 1463.9,749.0 1477.5,750.0 C1491.1,751.0 1511.5,746.3 1518.3,745.6" stroke="#ffa000" stroke-width="1.2" fill="none"/>
<path d="M411.0,577.0 C420.2,576.0 450.3,573.3 466.0,571.0 C481.7,568.7 492.1,567.2 505.0,563.4 C517.9,559.6 529.8,552.5 543.6,548.0 C557.4,543.5 573.0,541.0 588.0,536.3 C603.0,531.6 620.3,524.9 633.4,520.0 C646.5,515.1 652.7,512.2 666.6,507.0 C680.5,501.8 703.9,493.3 716.8,488.6 C729.7,483.9 732.6,485.8 744.0,479.0 C755.4,472.2 774.2,457.2 785.0,448.0 C795.8,438.8 799.2,432.3 809.0,424.0 C818.8,415.7 831.9,404.3 844.0,398.0 C856.1,391.7 870.6,389.1 881.7,386.4 C892.8,383.7 901.1,383.0 910.8,382.0 C920.5,381.0 925.8,378.2 940.0,380.6 C954.2,383.0 982.8,391.5 996.0,396.6 C1009.2,401.7 1011.2,404.9 1019.5,411.0 C1027.8,417.1 1037.5,426.9 1045.7,433.0 C1054.0,439.1 1062.7,443.0 1069.0,447.5 C1075.3,452.0 1077.7,454.6 1083.5,460.0 C1089.3,465.4 1097.9,473.7 1104.0,480.0 C1110.1,486.3 1108.8,485.5 1120.0,498.0 C1131.2,510.5 1159.0,543.0 1171.0,555.0 C1183.0,567.0 1182.6,563.0 1192.0,570.0 C1201.4,577.0 1217.0,587.8 1227.5,596.7 C1238.0,605.6 1247.9,616.6 1255.0,623.5 C1262.1,630.4 1262.7,633.4 1270.0,638.0 C1277.3,642.6 1287.3,645.2 1299.0,651.0 C1310.7,656.8 1330.7,668.0 1340.0,672.8 C1349.3,677.6 1347.2,677.3 1355.0,680.0 C1362.8,682.7 1372.9,683.7 1386.5,689.0 C1400.1,694.3 1420.6,705.7 1436.7,712.0 C1452.8,718.3 1468.5,722.3 1483.3,726.7 C1498.1,731.1 1518.5,736.4 1525.6,738.3" stroke="#ff1414" stroke-width="2.1" fill="none"/>
<path d="M411.0,517.0 C415.0,518.3 427.8,521.1 435.0,524.6 C442.2,528.1 448.0,534.1 454.5,538.0 C461.0,541.9 467.6,545.0 474.0,548.0 C480.4,551.0 487.2,555.1 493.0,555.7 C498.8,556.3 503.2,555.1 509.0,551.8 C514.8,548.5 521.6,542.1 528.0,536.0 C534.4,529.9 541.0,520.5 547.5,515.0 C554.0,509.5 560.2,506.6 567.0,503.0 C573.8,499.4 580.5,496.7 588.0,493.6 C595.5,490.6 602.8,487.8 612.0,484.7 C621.2,481.6 633.3,478.9 643.0,475.0 C652.7,471.1 661.6,467.3 670.0,461.5 C678.4,455.7 685.7,447.2 693.5,440.0 C701.3,432.8 707.8,424.8 716.8,418.0 C725.8,411.2 736.4,409.7 747.8,399.5 C759.2,389.3 774.8,373.2 785.0,357.0 C795.2,340.8 803.2,314.5 809.0,302.0 C814.8,289.5 816.2,287.6 820.0,282.0 C823.8,276.4 828.6,271.3 832.0,268.7 C835.4,266.1 837.8,265.9 840.6,266.6 C843.4,267.3 846.1,269.5 849.0,273.0 C851.9,276.5 854.1,281.3 858.0,287.6 C861.9,293.9 868.9,304.9 872.6,311.0 C876.3,317.1 876.1,315.8 880.0,324.0 C883.9,332.2 890.4,348.2 896.0,360.0 C901.6,371.8 908.8,385.5 913.7,395.0 C918.6,404.5 920.9,411.7 925.3,417.0 C929.7,422.3 935.9,422.7 940.0,427.0 C944.1,431.3 945.5,434.2 950.0,443.0 C954.5,451.8 962.1,470.3 966.8,480.0 C971.5,489.7 973.2,492.9 978.4,501.0 C983.6,509.1 991.4,517.7 997.8,528.4 C1004.2,539.1 1012.1,555.6 1017.0,565.0 C1021.9,574.4 1022.2,578.4 1027.0,584.6 C1031.8,590.8 1038.9,596.2 1046.0,602.0 C1053.1,607.8 1063.0,615.2 1069.5,619.5 C1076.0,623.8 1080.0,625.3 1085.0,628.0 C1090.0,630.7 1092.1,635.5 1099.5,635.7 C1106.9,635.9 1117.8,630.1 1129.5,629.0 C1141.2,627.9 1160.3,629.9 1169.6,629.0 C1178.9,628.1 1177.0,622.4 1185.2,623.5 C1193.4,624.6 1211.5,632.4 1218.6,635.7 C1225.6,639.0 1223.8,638.9 1227.5,643.5 C1231.2,648.1 1236.4,656.5 1241.0,663.5 C1245.6,670.5 1250.3,677.9 1255.0,685.8 C1259.7,693.6 1262.5,703.1 1269.0,710.6 C1275.5,718.1 1286.3,725.2 1293.8,731.0 C1301.3,736.8 1305.8,743.9 1314.0,745.6 C1322.2,747.3 1332.1,739.8 1343.3,741.3 C1354.5,742.8 1369.1,751.2 1381.0,754.4 C1392.9,757.5 1405.5,759.0 1414.8,760.2 C1424.1,761.4 1427.7,763.4 1436.7,761.7 C1445.7,760.0 1459.0,753.2 1468.7,750.0 C1478.4,746.8 1488.2,744.7 1495.0,742.7 C1501.8,740.8 1504.5,740.5 1509.6,738.3 C1514.7,736.1 1522.9,731.0 1525.6,729.6" stroke="#0b8a0b" stroke-width="2" fill="none"/>
<line x1="717.5" y1="116" x2="717.5" y2="845" stroke="#b0b0b0" stroke-width="1" stroke-dasharray="6,4"/>
<line x1="411" y1="354.5" x2="1575" y2="354.5" stroke="#b0b0b0" stroke-width="1" stroke-dasharray="6,4"/>
<line x1="411" y1="703.5" x2="1575" y2="703.5" stroke="#26a69a" stroke-width="1" stroke-dasharray="3,3"/>
<text x="414.0" y="460.5" fill="#f5a31a" font-size="12" text-anchor="middle" font-weight="normal">Exit</text><circle cx="414.0" cy="469.5" r="4.6" fill="#f5a31a"/><text x="414.0" y="488.0" fill="#ef5350" font-size="12" text-anchor="middle" font-weight="normal">Sell</text><path d="M414.0,502.0 l-5,-5 h3 v-5 h4 v5 h3 z" fill="#ef5350"/>
<path d="M474.0,548.0 l-5,5 h3 v5 h4 v-5 h3 z" fill="#26a69a"/><text x="474.0" y="575.1" fill="#26a69a" font-size="12" text-anchor="middle" font-weight="normal">Buy</text><path d="M474.0,578.0 l-5,5 h3 v5 h4 v-5 h3 z" fill="#22e622"/><text x="474.0" y="602.2" fill="#22e622" font-size="12" text-anchor="middle" font-weight="normal">Entry</text>
<text x="487.8" y="507.5" fill="#f5a31a" font-size="12" text-anchor="middle" font-weight="normal">Exit</text><circle cx="487.8" cy="517.0" r="4.6" fill="#f5a31a"/><text x="487.8" y="536.5" fill="#ef5350" font-size="12" text-anchor="middle" font-weight="normal">Sell</text><path d="M487.8,549.0 l-5,-5 h3 v-5 h4 v5 h3 z" fill="#ef5350"/>
<path d="M510.5,511.0 l-5,5 h3 v5 h4 v-5 h3 z" fill="#26a69a"/><text x="510.5" y="535.5" fill="#26a69a" font-size="12" text-anchor="middle" font-weight="normal">Buy</text><path d="M510.5,538.0 l-5,5 h3 v5 h4 v-5 h3 z" fill="#22e622"/><text x="510.5" y="562.5" fill="#22e622" font-size="12" text-anchor="middle" font-weight="normal">Entry</text>
<text x="550.0" y="466.1" fill="#f5a31a" font-size="12" text-anchor="middle" font-weight="normal">Exit</text><circle cx="550.0" cy="474.7" r="4.6" fill="#f5a31a"/><text x="550.0" y="493.2" fill="#ef5350" font-size="12" text-anchor="middle" font-weight="normal">Sell</text><path d="M550.0,506.7 l-5,-5 h3 v-5 h4 v5 h3 z" fill="#ef5350"/>
<path d="M573.0,505.5 l-5,5 h3 v5 h4 v-5 h3 z" fill="#26a69a"/><text x="573.0" y="530.1" fill="#26a69a" font-size="12" text-anchor="middle" font-weight="normal">Buy</text><path d="M573.0,533.0 l-5,5 h3 v5 h4 v-5 h3 z" fill="#22e622"/><text x="573.0" y="557.1" fill="#22e622" font-size="12" text-anchor="middle" font-weight="normal">Entry</text>
<text x="632.6" y="431.2" fill="#f5a31a" font-size="12" text-anchor="middle" font-weight="normal">Exit</text><circle cx="632.6" cy="439.8" r="4.6" fill="#f5a31a"/><text x="632.6" y="458.3" fill="#ef5350" font-size="12" text-anchor="middle" font-weight="normal">Sell</text><path d="M632.6,472.0 l-5,-5 h3 v-5 h4 v5 h3 z" fill="#ef5350"/>
<path d="M653.5,463.0 l-5,5 h3 v5 h4 v-5 h3 z" fill="#26a69a"/><text x="653.5" y="487.5" fill="#26a69a" font-size="12" text-anchor="middle" font-weight="normal">Buy</text><path d="M653.5,491.0 l-5,5 h3 v5 h4 v-5 h3 z" fill="#22e622"/><text x="653.5" y="515.0" fill="#22e622" font-size="12" text-anchor="middle" font-weight="normal">Entry</text>
<text x="723.4" y="368.2" fill="#f5a31a" font-size="12" text-anchor="middle" font-weight="normal">Exit</text><circle cx="723.4" cy="376.5" r="4.6" fill="#f5a31a"/><text x="723.4" y="394.5" fill="#ef5350" font-size="12" text-anchor="middle" font-weight="normal">Sell</text><path d="M723.4,408.0 l-5,-5 h3 v-5 h4 v5 h3 z" fill="#ef5350"/>
<path d="M744.0,384.0 l-5,5 h3 v5 h4 v-5 h3 z" fill="#26a69a"/><text x="744.0" y="411.5" fill="#26a69a" font-size="12" text-anchor="middle" font-weight="normal">Buy</text><path d="M744.0,415.0 l-5,5 h3 v5 h4 v-5 h3 z" fill="#22e622"/><text x="744.0" y="438.5" fill="#22e622" font-size="12" text-anchor="middle" font-weight="normal">Entry</text>
<text x="823.7" y="209.8" fill="#f5a31a" font-size="12" text-anchor="middle" font-weight="normal">Exit</text><circle cx="823.7" cy="217.2" r="4.6" fill="#f5a31a"/><text x="823.7" y="236.8" fill="#ef5350" font-size="12" text-anchor="middle" font-weight="normal">Sell</text><path d="M823.7,250.7 l-5,-5 h3 v-5 h4 v5 h3 z" fill="#ef5350"/>
<circle cx="717.5" cy="354.5" r="4.6" fill="#8c8c8c"/>
<circle cx="717.5" cy="418" r="4.6" fill="#0b8a0b"/>
<circle cx="717.5" cy="470" r="4.6" fill="#ffa000"/>
<circle cx="717.5" cy="489" r="4.6" fill="#ff1414"/>
</g>
<g clip-path="url(#ax)">
<line x1="1575.5" y1="116" x2="1575.5" y2="845" stroke="#2a2e39" stroke-width="1"/>
<line x1="411" y1="845.5" x2="1575" y2="845.5" stroke="#2a2e39" stroke-width="1"/>
<text x="1585" y="121.0" fill="#d8d8d8" font-size="12" font-weight="bold">30.00</text>
<text x="1585" y="180.0" fill="#d8d8d8" font-size="12" font-weight="bold">28.00</text>
<text x="1585" y="239.0" fill="#d8d8d8" font-size="12" font-weight="bold">26.00</text>
<text x="1585" y="298.0" fill="#d8d8d8" font-size="12" font-weight="bold">24.00</text>
<text x="1585" y="416.0" fill="#d8d8d8" font-size="12" font-weight="bold">20.00</text>
<text x="1585" y="475.0" fill="#d8d8d8" font-size="12" font-weight="bold">18.00</text>
<text x="1585" y="534.0" fill="#d8d8d8" font-size="12" font-weight="bold">16.00</text>
<text x="1585" y="593.0" fill="#d8d8d8" font-size="12" font-weight="bold">14.00</text>
<text x="1585" y="652.0" fill="#d8d8d8" font-size="12" font-weight="bold">12.00</text>
<text x="1585" y="829.0" fill="#d8d8d8" font-size="12" font-weight="bold">6.00</text>
<rect x="1575.5" y="345" width="45" height="20" fill="#141824"/><text x="1598" y="359.3" fill="#ffffff" font-size="12" font-weight="bold" text-anchor="middle">21.90</text>
<rect x="1514" y="587" width="59" height="17" rx="2" fill="#7f7f7f"/><text x="1543.5" y="599.7" fill="#f0f0f0" font-size="11.5" font-weight="bold" text-anchor="middle" letter-spacing="-0.1">52w High</text>
<rect x="1575" y="587" width="46" height="17" rx="2" fill="#8a8a8a"/><text x="1598.0" y="599.7" fill="#f0f0f0" font-size="11.5" font-weight="bold" text-anchor="middle" letter-spacing="-0.1">13.75</text>
<rect x="1575" y="695" width="46" height="17" rx="2" fill="#26a69a"/><text x="1598.0" y="707.7" fill="#ffffff" font-size="11.5" font-weight="bold" text-anchor="middle" letter-spacing="-0.1">10.11</text>
<rect x="1525" y="722" width="49" height="17" rx="2" fill="#0a800a"/><text x="1549.5" y="734.7" fill="#ffffff" font-size="11.5" font-weight="bold" text-anchor="middle" letter-spacing="-0.1">SMA 50</text>
<rect x="1575" y="722" width="40" height="17" rx="2" fill="#0a800a"/><text x="1595.0" y="734.7" fill="#ffffff" font-size="11.5" font-weight="bold" text-anchor="middle" letter-spacing="-0.1">9.20</text>
<rect x="1519" y="739" width="55" height="17" rx="2" fill="#ff0000"/><text x="1546.5" y="751.7" fill="#ffffff" font-size="11.5" font-weight="bold" text-anchor="middle" letter-spacing="-0.1">SMA 200</text>
<rect x="1575" y="739" width="40" height="17" rx="2" fill="#ff0000"/><text x="1595.0" y="751.7" fill="#ffffff" font-size="11.5" font-weight="bold" text-anchor="middle" letter-spacing="-0.1">8.89</text>
<rect x="1519" y="756" width="55" height="17" rx="2" fill="#ffa500"/><text x="1546.5" y="768.7" fill="#1a1a1a" font-size="11.5" font-weight="bold" text-anchor="middle" letter-spacing="-0.1">SMA 150</text>
<rect x="1575" y="756" width="40" height="17" rx="2" fill="#ffa500"/><text x="1595.0" y="768.7" fill="#1a1a1a" font-size="11.5" font-weight="bold" text-anchor="middle" letter-spacing="-0.1">8.66</text>
<rect x="682" y="845" width="71" height="23" fill="#141824"/>
<text x="497.5" y="863" fill="#d8d8d8" font-size="12" font-weight="bold" text-anchor="middle">lug</text>
<text x="602.5" y="863" fill="#d8d8d8" font-size="12" font-weight="bold" text-anchor="middle">ott</text>
<text x="717.5" y="863" fill="#d8d8d8" font-size="12" font-weight="bold" text-anchor="middle">10 gen '24</text>
<text x="810.5" y="863" fill="#d8d8d8" font-size="12" font-weight="bold" text-anchor="middle">apr</text>
<text x="914" y="863" fill="#d8d8d8" font-size="12" font-weight="bold" text-anchor="middle">lug</text>
<text x="1020.5" y="863" fill="#d8d8d8" font-size="12" font-weight="bold" text-anchor="middle">ott</text>
<text x="1123" y="863" fill="#d8d8d8" font-size="12" font-weight="bold" text-anchor="middle">2025</text>
<text x="1227" y="863" fill="#d8d8d8" font-size="12" font-weight="bold" text-anchor="middle">apr</text>
<text x="1329" y="863" fill="#d8d8d8" font-size="12" font-weight="bold" text-anchor="middle">lug</text>
<text x="1436" y="863" fill="#d8d8d8" font-size="12" font-weight="bold" text-anchor="middle">ott</text>
<text x="1517" y="863" fill="#d8d8d8" font-size="12" font-weight="bold" text-anchor="middle">9</text>
</g>
<text x="426" y="141" fill="#d9d9d9" font-size="17.5" font-weight="bold">STLAM.MI</text>
<text x="426" y="157" fill="#a0a0a0" font-size="12">Candlestick</text>
</svg>
<div class="a" style="left:1635px;top:90px;width:285px;height:21px;background:#1b1b1b"></div>
<div class="t" style="left:1640px;top:94px;font-size:12px;letter-spacing:-0.5px">Resources</div>
<svg class="a" style="left:1881px;top:97px" width="11" height="10" viewBox="0 0 11 10" fill="none" stroke="#404040" stroke-width="1.3"><rect x="1.2" y="4" width="6" height="5.3"/><path d="M3.6,4 V1 H9.6 V6.5 H7.2"/></svg>
<svg class="a" style="left:1903px;top:97px" width="10" height="10" viewBox="0 0 10 10"><path d="M1.5,1.5 L8.5,8.5 M8.5,1.5 L1.5,8.5" stroke="#404040" stroke-width="1.6"/></svg>
<div class="a" style="left:1637px;top:116px;width:71px;height:21px;background:#2b2b2b;border:1px solid #2f2f2f;border-radius:4px;box-sizing:border-box;"></div><div class="t" style="left:1637px;top:116px;width:71px;text-align:center;line-height:21px;font-size:12px;letter-spacing:0px">Watchlist</div>
<div class="a" style="left:1711px;top:116px;width:73px;height:21px;background:#1c1c1c;border:1px solid #2f2f2f;border-radius:4px;box-sizing:border-box;"></div><div class="t" style="left:1711px;top:117px;width:73px;text-align:center;line-height:21px;font-size:12px;letter-spacing:-0.3px">Trade Log</div>
<div class="a" style="left:1787px;top:116px;width:81px;height:21px;background:#1c1c1c;border:1px solid #2f2f2f;border-radius:4px;box-sizing:border-box;"></div><div class="t" style="left:1787px;top:117px;width:81px;text-align:center;line-height:21px;font-size:12px;letter-spacing:0px">AI Assistant</div>
<div class="a" style="left:1636px;top:138px;width:284px;height:740px;background:#2b2b2b;border:1px solid #333;border-radius:6px;box-sizing:border-box;"></div>
<svg class="a" style="left:1649px;top:150px" width="19" height="20" viewBox="0 0 19 20" fill="none" stroke="#e8e8e8" stroke-width="1.3" stroke-linejoin="round" stroke-linecap="round"><path d="M9,18 H3 Q1.5,18 1.5,16.5 V3 Q1.5,1.5 3,1.5 H10 L14.5,6 V11"/><path d="M10,1.5 V5 Q10,6 11,6 H14.5"/><path d="M11.5,16 H17 M14.25,13.2 V18.8"/></svg>
<svg class="a" style="left:1682px;top:151px" width="20" height="17" viewBox="0 0 20 17" fill="none" stroke="#e8e8e8" stroke-width="1.3" stroke-linejoin="round" stroke-linecap="round"><path d="M1.5,14.5 V3 Q1.5,1.5 3,1.5 H7 L8.8,3.3 H14 Q15.5,3.3 15.5,4.8 V6.5"/><path d="M1.5,14.5 L4,8 Q4.4,7 5.5,7 H17.5 Q19,7 18.5,8.5 L16.5,14 Q16,15.3 14.8,15.3 H2.3 Z"/></svg>
<svg class="a" style="left:1716px;top:151px" width="19" height="18" viewBox="0 0 19 18" fill="none" stroke="#e8e8e8" stroke-width="1.3" stroke-linejoin="round" stroke-linecap="round"><path d="M1.5,3 Q1.5,1.5 3,1.5 H13.5 L17.2,5.2 V15 Q17.2,16.5 15.7,16.5 H3 Q1.5,16.5 1.5,15 Z"/><path d="M5,1.5 V5.5 H12 V1.5 M4.5,16.5 V10.5 H14 V16.5"/></svg>
<svg class="a" style="left:1749px;top:150px" width="21" height="20" viewBox="0 0 21 20" fill="none" stroke="#e8e8e8" stroke-width="1.3" stroke-linejoin="round" stroke-linecap="round"><path d="M5,4.5 Q5,3 6.5,3 H15.5 L19,6.5 V15 Q19,16.5 17.5,16.5 H6.5 Q5,16.5 5,15 Z"/><path d="M8,3 V7 H14 V3 M8,16.5 V11.5 H16 V16.5"/><path d="M2,6.5 V17 Q2,18.5 3.5,18.5 H15"/></svg>
<div class="t" style="left:1795px;top:152px;font-style:italic;color:#8a8a8a;font-size:12px;letter-spacing:-1px">FTSE_MIB.csv</div>
<div class="a" style="left:1642px;top:181px;width:268px;height:2px;background:#474747"></div>
<div class="t" style="left:1642px;top:192px;font-size:12px">Nome Watchlist:</div>
<div class="a" style="left:1736px;top:191px;width:174px;height:19px;background:#2f2f2f;border:1px solid #3a3a3a;border-radius:4px;box-sizing:border-box;"></div>
<div class="a" style="left:1738px;top:208px;width:170px;height:1px;background:#9a9a9a"></div>
<div class="a" style="left:1737px;top:191px;width:172px;height:18px;overflow:hidden"><div class="t" style="left:2px;top:1px;font-size:12px;letter-spacing:-0.15px">ice FTSE MIB (Mercato Italiano)</div></div>
<div class="a" style="left:1644px;top:218px;width:87px;height:20px;background:#2f2f2f;border:1px solid #3a3a3a;border-radius:4px;box-sizing:border-box;"></div>
<div class="a" style="left:1646px;top:236px;width:83px;height:1px;background:#8a8a8a"></div>
<div class="t" style="left:1648px;top:220px;color:#8a8a8a;font-size:12px">Nome Societ...</div>
<div class="a" style="left:1738px;top:218px;width:88px;height:20px;background:#2f2f2f;border:1px solid #3a3a3a;border-radius:4px;box-sizing:border-box;"></div>
<div class="a" style="left:1740px;top:236px;width:84px;height:1px;background:#8a8a8a"></div>
<div class="t" style="left:1743px;top:220px;color:#8a8a8a;font-size:12px">Ticker (es. E...</div>
<div class="a" style="left:1834px;top:218px;width:75px;height:20px;background:#333333;border:1px solid #444;border-radius:4px;box-sizing:border-box;"></div>
<div class="t" style="left:1834px;top:220px;width:75px;text-align:center;font-size:12px">Aggiungi</div>
<div class="a" style="left:1643px;top:246px;width:266px;height:594px;background:#2b2b2b;border:1px solid #333;border-radius:0 4px 4px 0;box-sizing:border-box;"></div>
<div class="a" style="left:1643px;top:246px;width:255px;height:24px;background:#3b3b3b;border-bottom:1px solid #474747;box-sizing:border-box"></div>
<div class="a" style="left:1826px;top:246px;width:1px;height:23px;background:#4a4a4a"></div>
<div class="t" style="left:1643px;top:250px;width:165px;text-align:center;font-weight:bold;font-size:12px">Nome Societ&agrave;</div>
<svg class="a" style="left:1809px;top:255px" width="8" height="5" viewBox="0 0 8 5"><path d="M1,4.5 L4,1.5 L7,4.5" stroke="#e0e0e0" stroke-width="1.2" fill="none"/></svg>
<div class="t" style="left:1827px;top:250px;width:71px;text-align:center;font-weight:bold;font-size:12px">Ticker</div>
<div class="a" style="left:1903px;top:258px;width:2px;height:256px;background:#6a6a6a;border-radius:1px"></div>
<div class="a" style="left:1643px;top:299px;width:255px;height:1px;background:#242424"></div>
<div class="a" style="left:1826px;top:270px;width:1px;height:30px;background:#242424"></div>
<div class="t" style="left:1646px;top:276px;font-size:12px">A2A</div>
<div class="t" style="left:1830px;top:276px;font-size:12px">A2A.MI</div>
<div class="a" style="left:1643px;top:329px;width:255px;height:1px;background:#242424"></div>
<div class="a" style="left:1826px;top:300px;width:1px;height:30px;background:#242424"></div>
<div class="t" style="left:1646px;top:306px;font-size:12px">Amplifon</div>
<div class="t" style="left:1830px;top:306px;font-size:12px">AMP.MI</div>
<div class="a" style="left:1643px;top:359px;width:255px;height:1px;background:#242424"></div>
<div class="a" style="left:1826px;top:330px;width:1px;height:30px;background:#242424"></div>
<div class="t" style="left:1646px;top:336px;font-size:12px">Azimut Holding</div>
<div class="t" style="left:1830px;top:336px;font-size:12px">AZM.MI</div>
<div class="a" style="left:1643px;top:389px;width:255px;height:1px;background:#242424"></div>
<div class="a" style="left:1826px;top:360px;width:1px;height:30px;background:#242424"></div>
<div class="t" style="left:1646px;top:366px;font-size:12px">Banco BPM</div>
<div class="t" style="left:1830px;top:366px;font-size:12px">BAMI.MI</div>
<div class="a" style="left:1643px;top:419px;width:255px;height:1px;background:#242424"></div>
<div class="a" style="left:1826px;top:390px;width:1px;height:30px;background:#242424"></div>
<div class="t" style="left:1646px;top:396px;font-size:12px">Brunello Cucinelli</div>
<div class="t" style="left:1830px;top:396px;font-size:12px">BC.MI</div>
<div class="a" style="left:1643px;top:449px;width:255px;height:1px;background:#242424"></div>
<div class="a" style="left:1826px;top:420px;width:1px;height:30px;background:#242424"></div>
<div class="t" style="left:1646px;top:426px;font-size:12px">Banca Generali</div>
<div class="t" style="left:1830px;top:426px;font-size:12px">BGN.MI</div>
<div class="a" style="left:1643px;top:479px;width:255px;height:1px;background:#242424"></div>
<div class="a" style="left:1826px;top:450px;width:1px;height:30px;background:#242424"></div>
<div class="t" style="left:1646px;top:456px;font-size:12px">Banca Mediolanum</div>
<div class="t" style="left:1830px;top:456px;font-size:12px">BMED.MI</div>
<div class="a" style="left:1643px;top:509px;width:255px;height:1px;background:#242424"></div>
<div class="a" style="left:1826px;top:480px;width:1px;height:30px;background:#242424"></div>
<div class="t" style="left:1646px;top:486px;font-size:12px">Monte dei Paschi di Siena</div>
<div class="t" style="left:1830px;top:486px;font-size:12px">BMPS.MI</div>
<div class="a" style="left:1643px;top:539px;width:255px;height:1px;background:#242424"></div>
<div class="a" style="left:1826px;top:510px;width:1px;height:30px;background:#242424"></div>
<div class="t" style="left:1646px;top:516px;font-size:12px">BPER Banca</div>
<div class="t" style="left:1830px;top:516px;font-size:12px">BPE.MI</div>
<div class="a" style="left:1643px;top:569px;width:255px;height:1px;background:#242424"></div>
<div class="a" style="left:1826px;top:540px;width:1px;height:30px;background:#242424"></div>
<div class="t" style="left:1646px;top:546px;font-size:12px">Campari</div>
<div class="t" style="left:1830px;top:546px;font-size:12px">CPR.MI</div>
<div class="a" style="left:1643px;top:599px;width:255px;height:1px;background:#242424"></div>
<div class="a" style="left:1826px;top:570px;width:1px;height:30px;background:#242424"></div>
<div class="t" style="left:1646px;top:576px;font-size:12px">Diasorin</div>
<div class="t" style="left:1830px;top:576px;font-size:12px">DIA.MI</div>
<div class="a" style="left:1643px;top:629px;width:255px;height:1px;background:#242424"></div>
<div class="a" style="left:1826px;top:600px;width:1px;height:30px;background:#242424"></div>
<div class="t" style="left:1646px;top:606px;font-size:12px">Enel</div>
<div class="t" style="left:1830px;top:606px;font-size:12px">ENEL.MI</div>
<div class="a" style="left:1643px;top:659px;width:255px;height:1px;background:#242424"></div>
<div class="a" style="left:1826px;top:630px;width:1px;height:30px;background:#242424"></div>
<div class="t" style="left:1646px;top:636px;font-size:12px">Eni</div>
<div class="t" style="left:1830px;top:636px;font-size:12px">ENI.MI</div>
<div class="a" style="left:1643px;top:689px;width:255px;height:1px;background:#242424"></div>
<div class="a" style="left:1826px;top:660px;width:1px;height:30px;background:#242424"></div>
<div class="t" style="left:1646px;top:666px;font-size:12px">Erg</div>
<div class="t" style="left:1830px;top:666px;font-size:12px">ERG.MI</div>
<div class="a" style="left:1643px;top:719px;width:255px;height:1px;background:#242424"></div>
<div class="a" style="left:1826px;top:690px;width:1px;height:30px;background:#242424"></div>
<div class="t" style="left:1646px;top:696px;font-size:12px">FinecoBank</div>
<div class="t" style="left:1830px;top:696px;font-size:12px">FBK.MI</div>
<div class="a" style="left:1643px;top:749px;width:255px;height:1px;background:#242424"></div>
<div class="a" style="left:1826px;top:720px;width:1px;height:30px;background:#242424"></div>
<div class="t" style="left:1646px;top:726px;font-size:12px">Generali</div>
<div class="t" style="left:1830px;top:726px;font-size:12px">G.MI</div>
<div class="a" style="left:1643px;top:779px;width:255px;height:1px;background:#242424"></div>
<div class="a" style="left:1826px;top:750px;width:1px;height:30px;background:#242424"></div>
<div class="t" style="left:1646px;top:756px;font-size:12px">Hera</div>
<div class="t" style="left:1830px;top:756px;font-size:12px">HER.MI</div>
<div class="a" style="left:1643px;top:809px;width:255px;height:1px;background:#242424"></div>
<div class="a" style="left:1826px;top:780px;width:1px;height:30px;background:#242424"></div>
<div class="t" style="left:1646px;top:786px;font-size:12px">Italgas</div>
<div class="t" style="left:1830px;top:786px;font-size:12px">IG.MI</div>
<div class="a" style="left:1643px;top:839px;width:255px;height:1px;background:#242424"></div>
<div class="a" style="left:1826px;top:810px;width:1px;height:30px;background:#242424"></div>
<div class="t" style="left:1646px;top:816px;font-size:12px">Inwit</div>
<div class="t" style="left:1830px;top:816px;font-size:12px">INW.MI</div>
<div class="a" style="left:1644px;top:847px;width:265px;height:21px;background:#3a3a3a;border:1px solid #505050;border-radius:4px;box-sizing:border-box;"></div>
<div class="t" style="left:1644px;top:849px;width:265px;text-align:center;font-size:12px">Rimuovi Selezionato</div>
<div class="a" style="left:0px;top:883px;width:1920px;height:20px;background:#1a1a1a"></div>
<div class="t" style="left:5px;top:886px;font-size:12px">Log&nbsp;&nbsp;Status</div>
<svg class="a" style="left:1882px;top:888px" width="11" height="10" viewBox="0 0 11 10" fill="none" stroke="#404040" stroke-width="1.3"><rect x="1.2" y="4" width="6" height="5.3"/><path d="M3.6,4 V1 H9.6 V6.5 H7.2"/></svg>
<svg class="a" style="left:1903px;top:888px" width="10" height="10" viewBox="0 0 10 10"><path d="M1.5,1.5 L8.5,8.5 M8.5,1.5 L1.5,8.5" stroke="#404040" stroke-width="1.6"/></svg>
<div class="a" style="left:0px;top:903px;width:1920px;height:34px;background:#1f1f1f"></div>
<div class="t" style="left:0px;top:910px;font-size:12px">Log Level:</div>
<div class="a" style="left:60px;top:907px;width:90px;height:23px;background:#2b2b2b;border-radius:4px;border:1px solid #333;box-sizing:border-box;"></div><div class="a" style="left:62px;top:929px;width:86px;height:1px;background:#9a9a9a;border-radius:1px;"></div><div class="t" style="left:68px;top:907px;line-height:23px;color:#ffffff;">DEBUG</div><div class="a" style="left:136px;top:915px;width:11px;height:7px;line-height:0"><svg width="11" height="7" viewBox="0 0 11 7"><path d="M1,1 L5.5,5.5 L10,1" stroke="#e0e0e0" stroke-width="1.2" fill="none"/></svg></div>
<div class="a" style="left:1870px;top:908px;width:19px;height:20px;background:#1c1c1c;border:1px solid #2a2a2a;border-radius:5px;box-sizing:border-box;"></div>
<svg class="a" style="left:1871px;top:911px" width="16" height="16" viewBox="0 0 16 16" fill="none" stroke="#f0f0f0" stroke-width="1.1"><rect x="6" y="1.5" width="7.5" height="10" rx="1.2"/><path d="M6,4.5 H3.5 Q2,4.5 2,6 V13 Q2,14.5 3.5,14.5 H7.5 Q8.5,14.5 9,13.5"/></svg>
<div class="a" style="left:1899px;top:908px;width:19px;height:20px;background:#1c1c1c;border:1px solid #2a2a2a;border-radius:5px;box-sizing:border-box;"></div>
<svg class="a" style="left:1902px;top:912px" width="12" height="12" viewBox="0 0 12 12"><path d="M1,1 L11,10.5 M11,1 L1,10.5" stroke="#f0f0f0" stroke-width="1.1"/></svg>
<div class="a" style="left:1px;top:937px;width:1919px;height:95px;background:#2c2c2c;border-top:1px solid #383838;border-left:1px solid #333;border-radius:5px 5px 0 0;box-sizing:border-box"></div>
<div class="a" style="left:1911px;top:1001px;width:2px;height:17px;background:#8a8a8a"></div>
<div class="t" style="left:5px;top:938px;font-family:'Liberation Mono',monospace;font-size:11.67px;color:#33e046">[15:49:44.518] [SUCCESS] Report copiato.</div>
<div class="t" style="left:5px;top:954px;font-family:'Liberation Mono',monospace;font-size:11.67px;color:#33e046">[15:52:09.840] [SUCCESS] Backtest completato.</div>
<div class="t" style="left:5px;top:970px;font-family:'Liberation Mono',monospace;font-size:11.67px;color:#8c8c8c">[15:52:09.845] [DEBUG] PlottingHandler: Emetto &#39;plot_data_requested&#39; per &#39;Candlestick&#39;.</div>
<div class="t" style="left:5px;top:986px;font-family:'Liberation Mono',monospace;font-size:11.67px;color:#8c8c8c">[15:52:09.846] [DEBUG] Dispatcher: Inoltro richiesta per plotter &#39;Candlestick&#39;.</div>
<div class="t" style="left:5px;top:1002px;font-family:'Liberation Mono',monospace;font-size:11.67px;color:#33e046">[15:52:09.887] [SUCCESS] Operazione completata.</div>
</body></html>
